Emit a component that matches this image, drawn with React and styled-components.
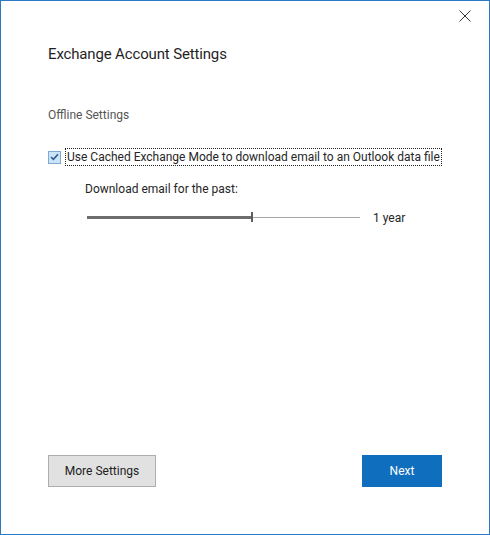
import React from "react";
import styled, { createGlobalStyle } from "styled-components";

const GlobalStyle = createGlobalStyle`
  html, body {
    margin: 0;
    padding: 0;
    background: #fff;
  }
  body {
    font-family: Roboto, "Noto Sans", "Liberation Sans", sans-serif;
  }
`;

const Window = styled.div`
  box-sizing: border-box;
  width: 490px;
  height: 535px;
  border: 1px solid #2b79c2;
  background: #fff;
  color: #262626;
  display: flex;
  flex-direction: column;
  white-space: nowrap;
`;

const TitleBar = styled.div`
  display: flex;
  justify-content: flex-end;
  align-items: center;
  height: 30px;
  padding-right: 18px;
`;

const CloseButton = styled.button`
  border: 0;
  background: none;
  padding: 0;
  width: 12px;
  height: 12px;
  display: flex;
  cursor: pointer;
`;

const Content = styled.div`
  padding: 0 47px;
`;

const Title = styled.h1`
  margin: 13px 0 0;
  font-size: 15px;
  line-height: 20px;
  font-weight: 400;
  color: #1f1f1f;
  letter-spacing: -0.15px;
`;

const SectionLabel = styled.div`
  margin-top: 43px;
  font-size: 12px;
  line-height: 16px;
  color: #555;
`;

const CheckRow = styled.label`
  margin-top: 25px;
  display: flex;
  align-items: center;
  gap: 4px;
  font-size: 12px;
  line-height: 16px;
  cursor: default;
`;

const Box = styled.span`
  box-sizing: border-box;
  width: 13px;
  height: 13px;
  border: 1px solid #7ea9d3;
  background: #cce4f7;
  display: flex;
  align-items: center;
  justify-content: center;
`;

const FocusText = styled.span`
  border: 1px dotted #222;
  padding: 0 1px;
`;

const Indented = styled.div`
  padding-left: 37px;
`;

const SubLabel = styled.div`
  margin-top: 15px;
  font-size: 12px;
  line-height: 16px;
`;

const SliderRow = styled.div`
  margin-top: 12px;
  display: flex;
  align-items: center;
  height: 16px;
  font-size: 12px;
  line-height: 16px;
`;

const Track = styled.div`
  margin-left: 2px;
  width: 273px;
  display: flex;
  align-items: center;
`;

const Filled = styled.div`
  height: 3px;
  background: #6d6d6d;
`;

const Thumb = styled.div`
  width: 2px;
  height: 10px;
  background: #5e5e5e;
`;

const Rest = styled.div`
  flex: 1;
  height: 1px;
  background: #a6a6a6;
`;

const Value = styled.span`
  margin-left: 13px;
  margin-top: 2px;
`;

const Footer = styled.div`
  margin-top: auto;
  padding: 0 47px 47px;
  display: flex;
  justify-content: space-between;
`;

const Button = styled.button`
  box-sizing: border-box;
  height: 32px;
  width: ${(p) => p.$width}px;
  font-family: inherit;
  font-size: 12px;
  border: 1px solid ${(p) => (p.$primary ? "#106ebe" : "#adadad")};
  background: ${(p) => (p.$primary ? "#106ebe" : "#e1e1e1")};
  color: ${(p) => (p.$primary ? "#fff" : "#222")};
  padding: 0;
  cursor: pointer;
`;

export default function App() {
  const fraction = 164 / 273;
  return (
    <>
      <GlobalStyle />
      <Window>
        <TitleBar>
          <CloseButton aria-label="Close">
            <svg width="12" height="12" viewBox="0 0 12 12">
              <path d="M0.5 0.5 L11.5 11.5 M11.5 0.5 L0.5 11.5" stroke="#333" strokeWidth="1" />
            </svg>
          </CloseButton>
        </TitleBar>
        <Content>
          <Title>Exchange Account Settings</Title>
          <SectionLabel>Offline Settings</SectionLabel>
          <CheckRow>
            <Box>
              <svg width="9" height="8" viewBox="0 0 9 8">
                <path d="M1 4 L3.4 6.4 L8 1.2" fill="none" stroke="#2c5d8f" strokeWidth="1.6" />
              </svg>
            </Box>
            <FocusText>Use Cached Exchange Mode to download email to an Outlook data file</FocusText>
          </CheckRow>
          <Indented>
            <SubLabel>Download email for the past:</SubLabel>
            <SliderRow>
              <Track>
                <Filled style={{ width: `${fraction * 100}%` }} />
                <Thumb />
                <Rest />
              </Track>
              <Value>1 year</Value>
            </SliderRow>
          </Indented>
        </Content>
        <Footer>
          <Button $width={108}>More Settings</Button>
          <Button $width={80} $primary>Next</Button>
        </Footer>
      </Window>
    </>
  );
}
